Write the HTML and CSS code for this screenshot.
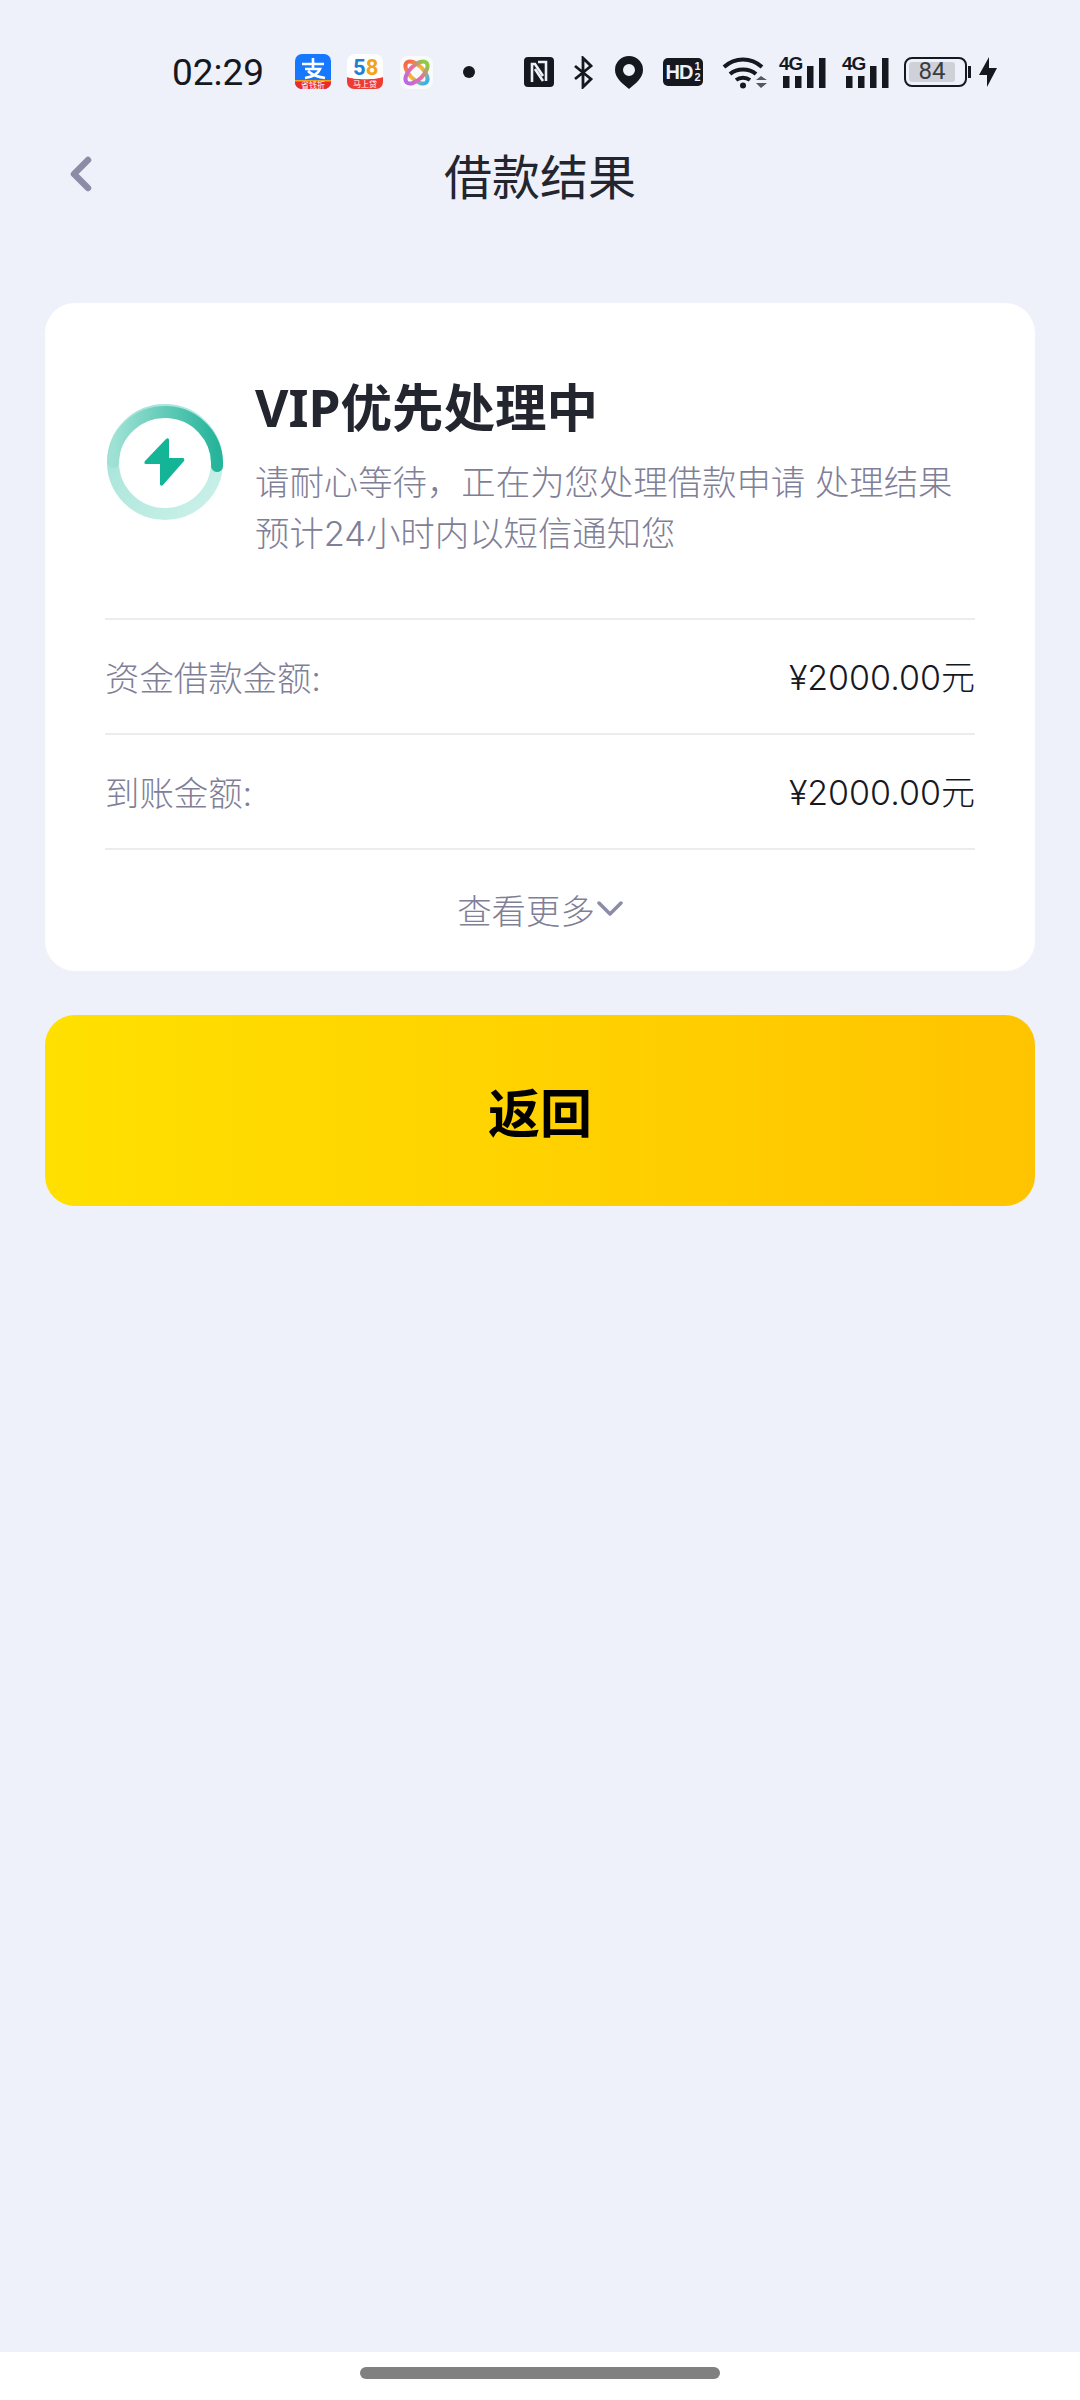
FILE: index.html
```html
<!DOCTYPE html>
<html lang="zh-CN">
<head>
    <meta charset="UTF-8">
    <meta name="viewport" content="width=device-width, initial-scale=1.0">
    <title>借款结果</title>
    <link rel="stylesheet" href="styles.css">
</head>
<body>
    <div class="screen">
        <div class="status-bar">
            <span class="time">02:29</span>
            <div class="app-icons">
                <svg class="app-icon" viewBox="0 0 36 36">
                    <rect width="36" height="35" rx="7" fill="#1677ff"/>
                    <path d="M0 26h36v2a7 7 0 0 1-7 7H7a7 7 0 0 1-7-7z" fill="#ee2a24"/>
                    <path d="M0 26h36v1.500H0z" fill="#f7a11a"/>
                    <path d="M7 10h22M18 4v10M10 15h15c-2 5-8 8-15 9M13 17c4 4 10 6 17 7" fill="none" stroke="#fff" stroke-width="2.600"/>
                    <text x="18" y="33.500" text-anchor="middle" class="app-tag">省钱折</text>
                </svg>
                <svg class="app-icon" viewBox="0 0 36 36">
                    <rect width="36" height="35" rx="8" fill="#fff"/>
                    <path d="M0 23c6 3 30 3 36 0v5a7 7 0 0 1-7 7H7a7 7 0 0 1-7-7z" fill="#ee3c34"/>
                    <text x="6" y="21" class="app-58"><tspan fill="#1d7fd6">5</tspan><tspan fill="#f5a312">8</tspan></text>
                    <text x="18" y="33" text-anchor="middle" class="app-tag">马上贷</text>
                </svg>
                <svg class="app-logo" viewBox="0 0 33 33">
                    <defs>
                        <linearGradient id="loop-a" x1="0" y1="0" x2="1" y2="0">
                            <stop offset="0" stop-color="#f4664a"/>
                            <stop offset="0.500" stop-color="#f7b733"/>
                            <stop offset="1" stop-color="#35b2ee"/>
                        </linearGradient>
                        <linearGradient id="loop-b" x1="0" y1="0" x2="1" y2="0">
                            <stop offset="0" stop-color="#b46be8"/>
                            <stop offset="0.500" stop-color="#ee6aa0"/>
                            <stop offset="1" stop-color="#86d23f"/>
                        </linearGradient>
                    </defs>
                    <rect width="33" height="33" rx="8" fill="#fafafa"/>
                    <ellipse cx="16.500" cy="16.500" rx="14" ry="7" transform="rotate(45 16.500 16.500)" fill="none" stroke="url(#loop-a)" stroke-width="4"/>
                    <ellipse cx="16.500" cy="16.500" rx="14" ry="7" transform="rotate(-45 16.500 16.500)" fill="none" stroke="url(#loop-b)" stroke-width="4"/>
                </svg>
                <span class="dot"></span>
            </div>
            <div class="sys-icons">
                <svg class="nfc" viewBox="0 0 30 30">
                    <rect width="30" height="30" rx="4" fill="#16181f"/>
                    <path d="M8 25V7h3l8 12M14 5h8v19" fill="none" stroke="#eef1f9" stroke-width="2.600"/>
                    <path d="M11 12l8 12" fill="none" stroke="#eef1f9" stroke-width="2.600"/>
                </svg>
                <svg class="bt" viewBox="0 0 21 33">
                    <path d="M2 10l16 13-8 8V2l8 8L2 23" fill="none" stroke="#16181f" stroke-width="2.800"/>
                </svg>
                <svg class="pin" viewBox="0 0 28 33">
                    <path fill-rule="evenodd" d="M14 0a14 14 0 0 1 14 14c0 8-8 14-14 19C8 28 0 22 0 14A14 14 0 0 1 14 0zm0 8a6 6 0 1 0 0 12 6 6 0 0 0 0-12z" fill="#16181f"/>
                </svg>
                <span class="hd">HD<span class="hd-sub">1<br>2</span></span>
                <svg class="wifi" viewBox="0 0 45 33">
                    <path d="M2 11c11-10 27-10 38 0M8 18c7-6 19-6 26 0M14 24c4-3 10-3 14 0" fill="none" stroke="#16181f" stroke-width="4"/>
                    <circle cx="21" cy="29.500" r="3" fill="#16181f"/>
                    <path d="M34 24l5-4 6 4zM34 27h11l-6 5z" fill="#55585f"/>
                </svg>
                <div class="signal">
                    <span class="net">4G</span>
                    <svg class="bars" viewBox="0 0 43 30">
                        <rect x="0" y="18" width="6.500" height="12" fill="#16181f"/>
                        <rect x="12" y="18" width="6.500" height="12" fill="#16181f"/>
                        <rect x="24" y="8" width="6.500" height="22" fill="#16181f"/>
                        <rect x="36" y="0" width="6.500" height="30" fill="#16181f"/>
                    </svg>
                </div>
                <div class="signal signal-last">
                    <span class="net">4G</span>
                    <svg class="bars" viewBox="0 0 43 30">
                        <rect x="0" y="18" width="6.500" height="12" fill="#16181f"/>
                        <rect x="12" y="18" width="6.500" height="12" fill="#16181f"/>
                        <rect x="24" y="8" width="6.500" height="22" fill="#16181f"/>
                        <rect x="36" y="0" width="6.500" height="30" fill="#16181f"/>
                    </svg>
                </div>
                <div class="battery">
                    <div class="battery-body"><div class="battery-level">84</div></div>
                    <span class="battery-cap"></span>
                </div>
                <svg class="charge" viewBox="0 0 18 30">
                    <path d="M10 0v11h8L8 30V18H0z" fill="#16181f"/>
                </svg>
            </div>
        </div>

        <div class="nav-bar">
            <svg class="back" viewBox="0 0 24 36">
                <path d="M19 4L5 18l14 14" fill="none" stroke="#8b8ca6" stroke-width="6.500" stroke-linecap="round" stroke-linejoin="round"/>
            </svg>
            <div class="nav-title">借款结果</div>
        </div>

        <div class="card">
            <div class="result-head">
                <svg class="progress" viewBox="0 0 116 116">
                    <defs>
                        <linearGradient id="track" x1="0" y1="0" x2="1" y2="1">
                            <stop offset="0" stop-color="#9fe2d5"/>
                            <stop offset="1" stop-color="#cdf1ea"/>
                        </linearGradient>
                        <linearGradient id="arc" x1="0" y1="0" x2="1" y2="0">
                            <stop offset="0" stop-color="#9fe2d5"/>
                            <stop offset="1" stop-color="#26b49a"/>
                        </linearGradient>
                    </defs>
                    <circle cx="58" cy="58" r="52" fill="none" stroke="url(#track)" stroke-width="12"/>
                    <path d="M6 58A52 52 0 0 1 110 62" fill="none" stroke="url(#arc)" stroke-width="12" stroke-linecap="round"/>
                    <path d="M59 35L38 57c-1 1-1 3 1 3h14v20c0 2 2 2 3 1l21-24c1-1 0-3-1-3H62V36c0-2-2-2-3-1z" fill="#14b596"/>
                </svg>
                <div class="result-text">
                    <div class="result-title">VIP优先处理中</div>
                    <div class="result-desc">请耐心等待，正在为您处理借款申请 处理结果预计24小时内以短信通知您</div>
                </div>
            </div>
            <div class="row">
                <span class="row-label">资金借款金额:</span>
                <span class="row-value">¥2000.00元</span>
            </div>
            <div class="row">
                <span class="row-label">到账金额:</span>
                <span class="row-value">¥2000.00元</span>
            </div>
            <div class="more">
                <span>查看更多</span>
                <svg class="more-arrow" viewBox="0 0 26 16">
                    <path d="M2 2l11 11L24 2" fill="none" stroke="#8b8ca6" stroke-width="3.500" stroke-linecap="round" stroke-linejoin="round"/>
                </svg>
            </div>
        </div>

        <button class="btn-back">返回</button>

        <div class="home-bar"><span class="home-pill"></span></div>
    </div>
</body>
</html>
```

FILE: styles.css
```css
* {
    margin: 0;
    padding: 0;
    box-sizing: border-box;
}

body {
    font-family: Inter, "Noto Sans CJK SC", sans-serif;
    background: #eef1f9;
    color: #16181f;
}

.screen {
    width: 1080px;
    height: 2400px;
    display: flex;
    flex-direction: column;
}

.status-bar {
    height: 72px;
    margin-top: 36px;
    padding-left: 172px;
    display: flex;
    align-items: center;
}

.time {
    font-family: Roboto, sans-serif;
    font-size: 37px;
    width: 123px;
}

.app-icons {
    display: flex;
    align-items: center;
    gap: 16px;
}

.app-icon {
    width: 36px;
    height: 36px;
}

.app-logo {
    width: 33px;
    height: 33px;
    margin-left: 1px;
}

.app-58 {
    font-family: Roboto, sans-serif;
    font-size: 22px;
    font-weight: 700;
}

.app-tag {
    font-family: "Noto Sans CJK SC", sans-serif;
    font-size: 8px;
    fill: #fff;
}

.dot {
    width: 12px;
    height: 12px;
    margin-left: 14px;
    border-radius: 50%;
    background: #16181f;
}

.sys-icons {
    display: flex;
    align-items: center;
    margin-left: 49px;
}

.nfc {
    width: 30px;
    height: 30px;
    margin-right: 19px;
}

.bt {
    width: 21px;
    height: 33px;
    margin-right: 21px;
}

.pin {
    width: 28px;
    height: 33px;
    margin-right: 20px;
}

.hd {
    width: 40px;
    height: 28px;
    margin-right: 19px;
    border-radius: 5px;
    background: #16181f;
    color: #eef1f9;
    font-family: "Liberation Sans", sans-serif;
    font-size: 20px;
    font-weight: 700;
    letter-spacing: -1px;
    display: flex;
    align-items: center;
    justify-content: center;
}

.hd-sub {
    font-size: 11px;
    line-height: 11px;
    letter-spacing: 0;
    margin-left: 2px;
}

.wifi {
    width: 45px;
    height: 33px;
    margin-right: 12px;
}

.signal {
    position: relative;
    width: 46px;
    height: 32px;
    margin-right: 17px;
}

.signal-last {
    margin-right: 16px;
}

.net {
    position: absolute;
    left: 0;
    top: -2px;
    font-family: "Liberation Sans", sans-serif;
    font-size: 19px;
    font-weight: 700;
    letter-spacing: -1px;
    line-height: 19px;
}

.bars {
    position: absolute;
    left: 4px;
    top: 2px;
    width: 43px;
    height: 30px;
}

.battery {
    display: flex;
    align-items: center;
    gap: 1px;
    margin-right: 8px;
}

.battery-body {
    width: 63px;
    height: 30px;
    border: 2.500px solid #16181f;
    border-radius: 8px;
    padding: 3px;
}

.battery-level {
    width: 46px;
    height: 100%;
    border-radius: 3px;
    background: #cfd1d9;
    color: #3a3c44;
    font-family: Roboto, sans-serif;
    font-size: 24px;
    line-height: 19px;
    text-align: center;
}

.battery-cap {
    width: 3px;
    height: 12px;
    background: #16181f;
}

.charge {
    width: 18px;
    height: 30px;
}

.nav-bar {
    position: relative;
    height: 62px;
    margin-top: 35px;
    margin-bottom: 1px;
    display: flex;
    align-items: center;
    justify-content: center;
}

.back {
    position: absolute;
    left: 69px;
    top: 13px;
    width: 24px;
    height: 36px;
}

.nav-title {
    font-family: "Noto Sans CJK SC", sans-serif;
    font-size: 48px;
    line-height: 62px;
    color: #23252f;
}

.card {
    margin: 97px 45px 0;
    height: 668px;
    padding: 0 60px;
    background: #fff;
    border-radius: 30px;
}

.result-head {
    height: 315px;
    padding-top: 74px;
    display: flex;
}

.progress {
    width: 116px;
    height: 116px;
    margin-top: 27px;
    margin-left: 2px;
    flex-shrink: 0;
}

.result-text {
    margin-left: 32px;
}

.result-title {
    font-family: "Noto Sans", "Noto Sans CJK SC", sans-serif;
    font-size: 51.500px;
    font-weight: 700;
    line-height: 60px;
    color: #23252f;
}

.result-desc {
    margin-top: 21px;
    width: 710px;
    font-size: 34.400px;
    font-weight: 300;
    line-height: 50.500px;
    color: #7f8097;
}

.row {
    height: 115px;
    padding-bottom: 2px;
    border-top: 2px solid #ececf0;
    display: flex;
    align-items: center;
    justify-content: space-between;
}

.row-label {
    font-size: 34.400px;
    font-weight: 300;
    color: #7f8097;
}

.row-value {
    font-size: 34px;
    font-weight: 300;
    color: #16181f;
}

.more {
    height: 123px;
    padding-bottom: 4px;
    border-top: 2px solid #ececf0;
    display: flex;
    align-items: center;
    justify-content: center;
    gap: 2px;
    font-size: 34.400px;
    font-weight: 300;
    color: #7f8097;
}

.more-arrow {
    width: 26px;
    height: 16px;
}

.btn-back {
    margin: 44px 45px 0;
    height: 191px;
    border: none;
    border-radius: 30px;
    background: linear-gradient(90deg, #ffe000 0%, #ffc400 100%);
    color: #000;
    font-family: "Noto Sans CJK SC", sans-serif;
    font-size: 52px;
    font-weight: 700;
}

.home-bar {
    margin-top: auto;
    height: 48px;
    background: #fff;
    display: flex;
    justify-content: center;
    padding-top: 15px;
}

.home-pill {
    width: 360px;
    height: 12px;
    border-radius: 6px;
    background: #808080;
}
```
